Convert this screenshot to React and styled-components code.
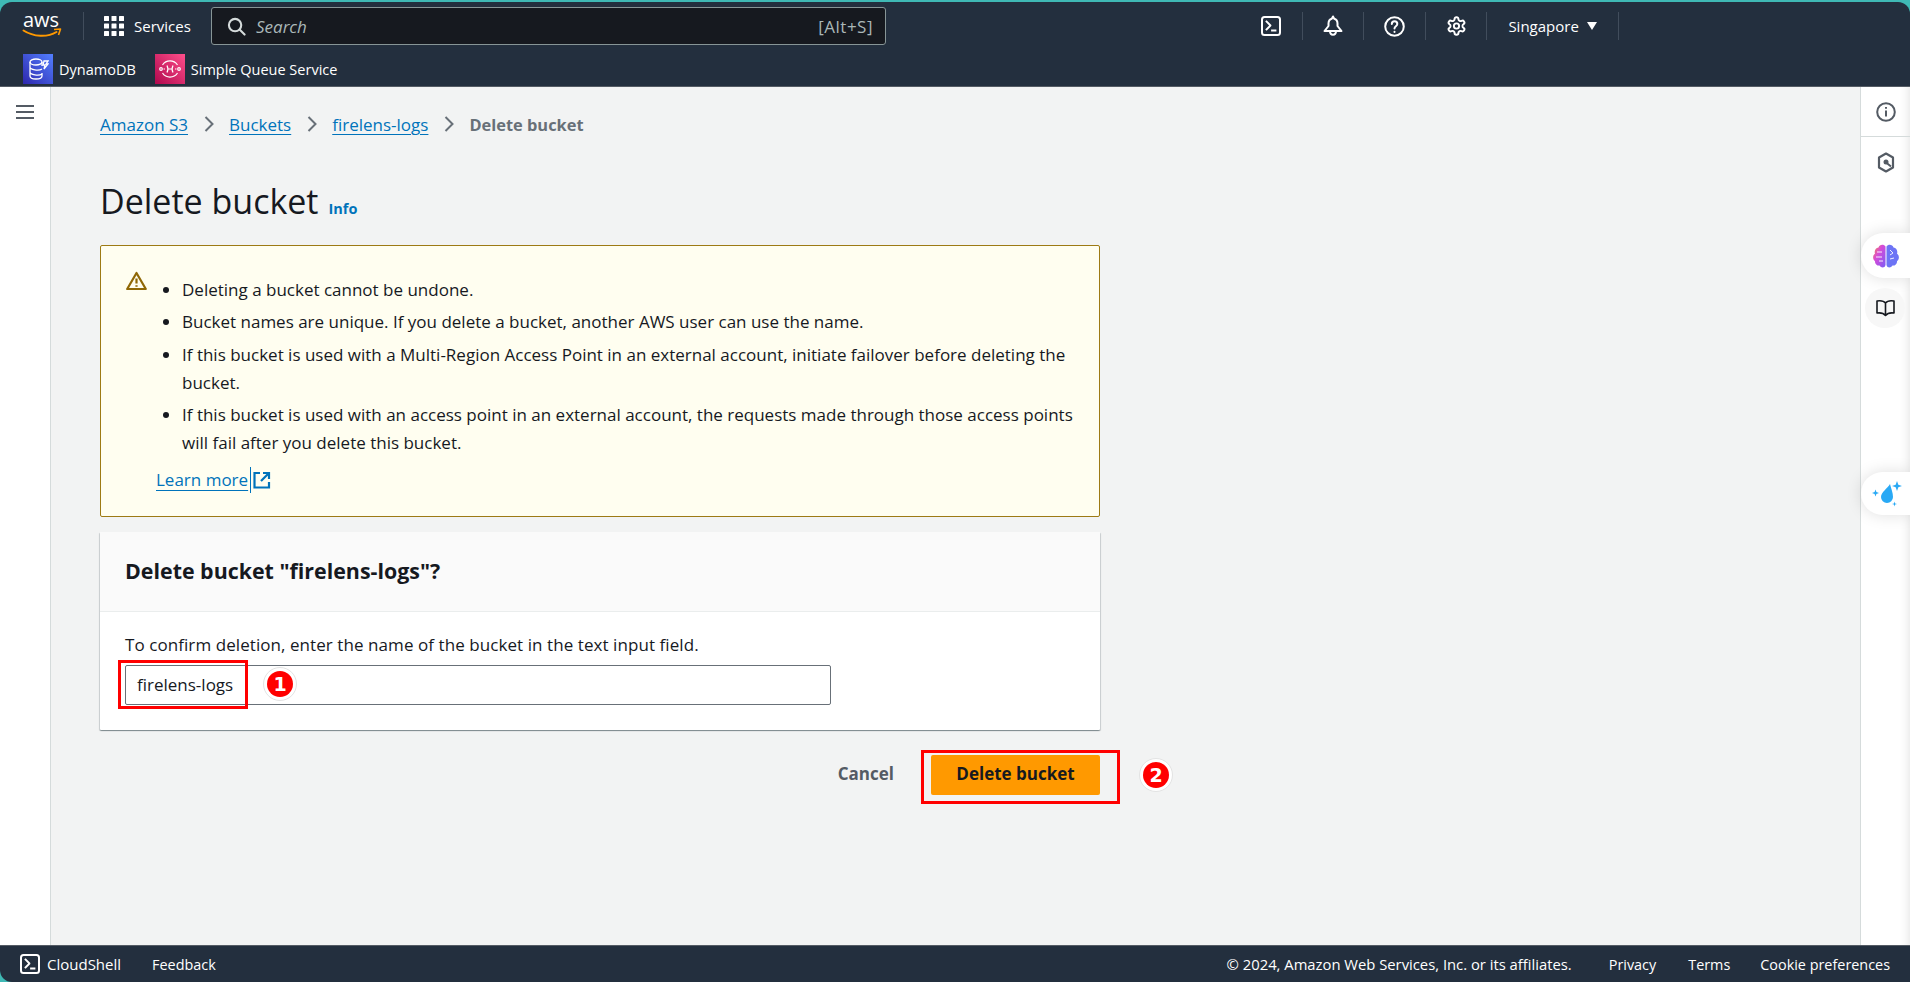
import React from "react";
import styled, { createGlobalStyle } from "styled-components";

const Global = createGlobalStyle`
  html, body { margin: 0; padding: 0; height: 100%; overflow: hidden; }
  body { font-family: "Open Sans", "Noto Sans", sans-serif; color: #16191f; }
  * { box-sizing: border-box; }
`;

const Page = styled.div`
  width: 1910px; height: 982px; display: flex; flex-direction: column;
  background: #3fb9b5; padding-top: 2px; overflow: hidden;
`;
const Header = styled.header`
  height: 85px; background: #232f3e; border-radius: 12px 12px 0 0;
  border-bottom: 1px solid #545b64; display: flex; flex-direction: column; flex: none;
`;
const TopRow = styled.div`
  height: 48px; display: flex; align-items: center; color: #fff; padding-left: 23px; flex: none;
`;
const FavRow = styled.div`
  height: 36px; display: flex; align-items: center; padding: 2px 0 0 23px; gap: 19px; color: #fff; flex: none;
`;
const Logo = styled.svg`width: 39px; height: 28px; flex: none; overflow: visible;`;
const Divider = styled.span`
  width: 1px; height: 28px; background: #414d5c; flex: none; margin: ${p => p.$m || "0"};
`;
const ServicesBtn = styled.div`
  display: flex; align-items: center; gap: 10px; font-size: 15px; margin-left: 20px; width: 107px; white-space: nowrap;
`;
const SearchBox = styled.div`
  width: 675px; height: 38px; background: #16191f; border: 1px solid #879596; border-radius: 3px;
  display: flex; align-items: center; padding: 0 12px 0 15px; gap: 10px; color: #aab7b8; font-size: 17px;
`;
const SearchText = styled.span`font-style: italic; flex: 1;`;
const ShortcutHint = styled.span`letter-spacing: 0.5px;`;
const Actions = styled.div`
  display: flex; align-items: center; margin-left: 355px; height: 28px;
`;
const ActionIcon = styled.div`
  width: 60.6px; height: 28px; display: flex; align-items: center; justify-content: center; flex: none;
`;
const Region = styled.div`
  display: flex; align-items: center; gap: 8px; font-size: 15px; padding-left: 21px; width: 131px; white-space: nowrap;
`;
const Caret = styled.span`
  width: 0; height: 0; border-left: 5px solid transparent; border-right: 5px solid transparent; border-top: 8px solid #fff;
`;
const Fav = styled.div`display: flex; align-items: center; gap: 6px; font-size: 14.5px; white-space: nowrap;`;
const FavIcon = styled.div`
  width: 30px; height: 30px; display: flex; align-items: center; justify-content: center; flex: none;
  background: linear-gradient(45deg, ${p => p.$from}, ${p => p.$to});
`;

const Main = styled.div`flex: 1; display: flex; background: #f2f3f3; min-height: 0;`;
const LeftNav = styled.aside`
  width: 51px; background: #fff; border-right: 1px solid #d5dbdb; flex: none; display: flex; justify-content: center; align-items: flex-start; padding-top: 17px;
`;
const Content = styled.main`flex: 1; padding: 25px 0 0 49px; position: relative;`;
const Column = styled.div`width: 1000px; display: flex; flex-direction: column;`;
const Crumbs = styled.nav`
  display: flex; align-items: center; height: 24px; font-size: 17px;
`;
const Link = styled.a`
  color: #0073bb; text-decoration: underline; text-underline-offset: 3px; text-decoration-thickness: 1px;
`;
const Sep = styled.svg`width: 16px; height: 16px; margin: 0 12.5px; flex: none;`;
const Current = styled.span`color: #687078; font-weight: 700; font-size: 16.4px;`;
const TitleRow = styled.div`display: flex; align-items: baseline; gap: 10px; margin-top: 43px; height: 44px;`;
const Title = styled.h1`margin: 0; font-weight: 400; font-size: 34px; line-height: 44px;`;
const InfoLink = styled.a`color: #0073bb; font-size: 14.5px; font-weight: 700;`;
const Alert = styled.section`
  margin-top: 22px; height: 272px; background: #fffef0; border: 1px solid #9d7a14; border-radius: 2px;
  padding: 25px 0 0 25px; display: flex;
`;
const AlertIcon = styled.svg`width: 21px; height: 20px; flex: none;`;
const AlertBody = styled.div`display: flex; flex-direction: column; font-size: 17px; line-height: 28px;`;
const Bullets = styled.ul`margin: 0; padding: 5px 0 0 35px; width: 935px;`;
const Bullet = styled.li`
  margin: 0 0 4.4px; &::marker { font-size: 17px; }
`;
const LearnRow = styled.div`display: flex; align-items: center; margin: 5px 0 0 9px; height: 26px;`;
const LearnLink = styled(Link)`
  border-right: 1px solid #0073bb; padding-right: 2px; line-height: 26px; text-underline-offset: 4px;
`;
const ExtIcon = styled.svg`width: 18px; height: 18px; margin-left: 2px;`;
const Card = styled.section`
  margin-top: 15px; height: 198px; background: #fff; box-shadow: 0 1px 1px 0 rgba(0,28,36,.3), 1px 1px 1px 0 rgba(0,28,36,.15), -1px 1px 1px 0 rgba(0,28,36,.15);
  border-radius: 1px;
`;
const CardHead = styled.div`
  height: 80px; background: #fafafa; border-bottom: 1px solid #eaeded; display: flex; align-items: center; padding: 0 25px 3px;
`;
const CardTitle = styled.h2`margin: 0; font-size: 21.4px; font-weight: 700;`;
const CardBody = styled.div`padding: 21px 25px 0; position: relative;`;
const Hint = styled.p`margin: 0; font-size: 17px; line-height: 24px; letter-spacing: 0.07px;`;
const Input = styled.div`
  margin-top: 8px; width: 706px; height: 40px; border: 1px solid #687078; border-radius: 2px; background: #fff;
  display: flex; align-items: center; padding: 0 11px 2px; font-size: 17px;
`;
const Highlight = styled.span`
  position: absolute; border: 3px solid #f00; pointer-events: none;
  left: ${p => p.$l}px; top: ${p => p.$t}px; width: ${p => p.$w}px; height: ${p => p.$h}px;
`;
const Badge = styled.span`
  position: absolute; left: ${p => p.$l}px; top: ${p => p.$t}px; width: 34px; height: 34px; border-radius: 50%;
  background: #fff; border: 1px solid #e3e3e3; display: flex; align-items: center; justify-content: center;
  &::before {
    content: "${p => p.$n}"; width: 26px; height: 26px; border-radius: 50%; background: #f00; color: #fff;
    font: 700 19px/26px "DejaVu Sans", sans-serif; text-align: center;
  }
`;
const Footer2 = styled.div`
  display: flex; justify-content: flex-end; align-items: center; margin-top: 25px; height: 40px; position: relative; gap: 37px;
`;
const CancelBtn = styled.span`color: #545b64; font-size: 17px; font-weight: 700; padding-bottom: 3px;`;
const PrimaryBtn = styled.button`
  width: 169px; height: 40px; background: #ff9900; border: none; border-radius: 2px; color: #16191f;
  font: 700 17px "Open Sans", sans-serif; padding: 0 0 3px;
`;

const RightRail = styled.aside`
  width: 50px; flex: none; background: #fff; border-left: 1px solid #d5dbdb; display: flex; flex-direction: column; position: relative;
  box-shadow: inset -12px 0 10px -10px rgba(0,0,0,.1);
`;
const RailCell = styled.div`
  height: ${p => p.$h}px; display: flex; align-items: center; justify-content: center; flex: none;
  border-bottom: ${p => p.$b ? "1px solid #d5dbdb" : "none"};
`;
const Float = styled.div`
  position: absolute; right: ${p => p.$r}px; top: ${p => p.$t}px; width: ${p => p.$w}px; height: ${p => p.$h}px;
  background: ${p => p.$bg || "#fff"}; display: flex; align-items: center; justify-content: center;
  border-radius: ${p => p.$round};
  box-shadow: ${p => p.$sh || "0 0 16px rgba(0,0,0,.13)"};
`;

const Footer = styled.footer`
  height: 37px; flex: none; background: #232f3e; border-radius: 0 0 0 12px; border-top: 1px solid #545b64; color: #fff;
  display: flex; align-items: center; padding: 0 20px 0 20px; font-size: 14.4px;
`;
const FootLeft = styled.div`display: flex; align-items: center; gap: 7px; font-size: 15px;`;
const FootItem = styled.span`margin-left: ${p => p.$m || 0}px; white-space: nowrap;`;
const Copyright = styled(FootItem)`font-size: 14.8px;`;
const Spacer = styled.div`flex: 1;`;

const TermIcon = () => (
  <svg width="20" height="20" viewBox="0 0 20 20" fill="none" stroke="#fff" strokeWidth="2" strokeLinejoin="round" strokeLinecap="square">
    <rect x="1" y="1" width="18" height="18" rx="2.5" />
    <path d="M5.500 5.500L9.500 9.500l-4 4M11 14.500h3.500" strokeWidth="1.800" />
  </svg>
);
const Chevron = () => (
  <Sep viewBox="0 0 16 16" fill="none" stroke="#687078" strokeWidth="2"><path d="M4.500 1L11.500 8l-7 7" /></Sep>
);

export default function App() {
  return (
    <Page>
      <Global />
      <Header>
        <TopRow>
          <Logo viewBox="0 0 39 28">
            <text x="0" y="15" fontFamily="Open Sans, sans-serif" fontSize="20" fill="#fff">aws</text>
            <path d="M0.500 18.500c10 6.500 24 7 33 1.500" stroke="#f90" strokeWidth="2" fill="none" strokeLinecap="round" />
            <path d="M31 17.500l6.500-.5-2 6" stroke="#f90" strokeWidth="1.600" fill="none" strokeLinejoin="round" />
          </Logo>
          <Divider $m="0 0 0 21px" />
          <ServicesBtn>
            <svg width="20" height="20" viewBox="0 0 20 20" fill="#fff">
              {[0, 7.500, 15].flatMap(x => [0, 7.500, 15].map(y => <rect key={`${x}-${y}`} x={x} y={y} width="5" height="5" rx=".5" />))}
            </svg>
            Services
          </ServicesBtn>
          <SearchBox>
            <svg width="19" height="19" viewBox="0 0 20 20" fill="none" stroke="#d5dbdb" strokeWidth="2.200" strokeLinecap="round">
              <circle cx="8.500" cy="8.500" r="6.500" />
              <path d="M13.500 13.500l5 5" />
            </svg>
            <SearchText>Search</SearchText>
            <ShortcutHint>[Alt+S]</ShortcutHint>
          </SearchBox>
          <Actions>
            <ActionIcon><TermIcon /></ActionIcon>
            <Divider />
            <ActionIcon>
              <svg width="20" height="22" viewBox="0 0 20 22" fill="none" stroke="#fff" strokeWidth="2" strokeLinejoin="round">
                <path d="M10 1.500l1.200 2.200c2.300.6 3.300 2.400 3.300 4.800v2.500l4 5h-17l4-5V8.500c0-2.400 1-4.200 3.300-4.800z" />
                <path d="M7 16c0 5 6 5 6 0" />
              </svg>
            </ActionIcon>
            <Divider />
            <ActionIcon>
              <svg width="21" height="21" viewBox="0 0 21 21" fill="none" stroke="#fff" strokeWidth="2" strokeLinecap="round">
                <circle cx="10.500" cy="10.500" r="9.300" />
                <path d="M7.800 8c0-3.600 5.500-3.600 5.500 0 0 2.300-2.800 2.300-2.800 4.600" />
                <path d="M10.500 15.800v.2" />
              </svg>
            </ActionIcon>
            <Divider />
            <ActionIcon>
              <svg width="21" height="22" viewBox="0 0 24 24" fill="none" stroke="#fff" strokeWidth="2.200" strokeLinecap="round" strokeLinejoin="round">
                <path d="M12.220 2h-.44a2 2 0 0 0-2 2v.18a2 2 0 0 1-1 1.730l-.43.250a2 2 0 0 1-2 0l-.15-.080a2 2 0 0 0-2.730.730l-.22.380a2 2 0 0 0 .73 2.730l.15.100a2 2 0 0 1 1 1.720v.510a2 2 0 0 1-1 1.740l-.15.090a2 2 0 0 0-.73 2.730l.22.380a2 2 0 0 0 2.730.730l.15-.080a2 2 0 0 1 2 0l.43.250a2 2 0 0 1 1 1.730V20a2 2 0 0 0 2 2h.44a2 2 0 0 0 2-2v-.18a2 2 0 0 1 1-1.730l.43-.250a2 2 0 0 1 2 0l.15.080a2 2 0 0 0 2.730-.730l.22-.390a2 2 0 0 0-.73-2.730l-.15-.080a2 2 0 0 1-1-1.740v-.500a2 2 0 0 1 1-1.740l.15-.090a2 2 0 0 0 .73-2.730l-.22-.380a2 2 0 0 0-2.730-.730l-.15.080a2 2 0 0 1-2 0l-.43-.250a2 2 0 0 1-1-1.730V4a2 2 0 0 0-2-2z" />
                <circle cx="12" cy="12" r="3" />
              </svg>
            </ActionIcon>
            <Divider />
            <Region>Singapore <Caret /></Region>
            <Divider />
          </Actions>
        </TopRow>
        <FavRow>
          <Fav>
            <FavIcon $from="#2e27ad" $to="#527fff">
              <svg width="22" height="24" viewBox="0 0 22 24" fill="none" stroke="#fff" strokeWidth="1.300">
                <ellipse cx="9" cy="5" rx="6" ry="3" />
                <path d="M3 5v14c0 4 12 4 12 0v-3M3 10c0 3 9 4 12 2M3 15c0 3 9 4 12 2M15 5v4" />
                <path d="M17 4h4l-2 3h2l-4 5 1-4h-2z" />
              </svg>
            </FavIcon>
            DynamoDB
          </Fav>
          <Fav>
            <FavIcon $from="#b0084d" $to="#ff4f8b">
              <svg width="24" height="24" viewBox="0 0 24 24" fill="none" stroke="#fff" strokeWidth="1.200">
                <path d="M4.500 8a9 9 0 0 1 15 0M4.500 16a9 9 0 0 0 15 0" />
                <path d="M9 8.500c1.200 2.300 1.200 4.700 0 7M15 8.500c-1.200 2.300-1.200 4.700 0 7M9.500 12h5" />
                <circle cx="3" cy="12" r="1.300" /><circle cx="21" cy="12" r="1.300" />
                <path d="M5.500 12h1.500M17 12h1.500" />
              </svg>
            </FavIcon>
            Simple Queue Service
          </Fav>
        </FavRow>
      </Header>
      <Main>
        <LeftNav>
          <svg width="18" height="16" viewBox="0 0 18 16" stroke="#545b64" strokeWidth="2">
            <path d="M0 2h18M0 8h18M0 14h18" />
          </svg>
        </LeftNav>
        <Content>
          <Column>
            <Crumbs>
              <Link>Amazon S3</Link>
              <Chevron />
              <Link>Buckets</Link>
              <Chevron />
              <Link>firelens-logs</Link>
              <Chevron />
              <Current>Delete bucket</Current>
            </Crumbs>
            <TitleRow>
              <Title>Delete bucket</Title>
              <InfoLink>Info</InfoLink>
            </TitleRow>
            <Alert>
              <AlertIcon viewBox="0 0 21 20" fill="none" stroke="#906806" strokeWidth="2.200" strokeLinejoin="round">
                <path d="M10.500 2L1.200 18h18.600z" />
                <path d="M10.500 7.500v5M10.500 14.200v1.600" strokeWidth="2.200" />
              </AlertIcon>
              <AlertBody>
                <Bullets>
                  <Bullet>Deleting a bucket cannot be undone.</Bullet>
                  <Bullet>Bucket names are unique. If you delete a bucket, another AWS user can use the name.</Bullet>
                  <Bullet>If this bucket is used with a Multi-Region Access Point in an external account, initiate failover before deleting the bucket.</Bullet>
                  <Bullet>If this bucket is used with an access point in an external account, the requests made through those access points will fail after you delete this bucket.</Bullet>
                </Bullets>
                <LearnRow>
                  <LearnLink>Learn more</LearnLink>
                  <ExtIcon viewBox="0 0 18 18" fill="none" stroke="#0073bb" strokeWidth="2.200">
                    <path d="M7 2H1.500v14.500H16V11M10 2h6v6M16 2L8 10" />
                  </ExtIcon>
                </LearnRow>
              </AlertBody>
            </Alert>
            <Card>
              <CardHead><CardTitle>Delete bucket "firelens-logs"?</CardTitle></CardHead>
              <CardBody>
                <Hint>To confirm deletion, enter the name of the bucket in the text input field.</Hint>
                <Input>firelens-logs</Input>
                <Highlight $l={18} $t={48} $w={130} $h={49} />
                <Badge $l={163} $t={55} $n="1" />
              </CardBody>
            </Card>
            <Footer2>
              <CancelBtn>Cancel</CancelBtn>
              <PrimaryBtn>Delete bucket</PrimaryBtn>
              <Highlight $l={821} $t={-5} $w={199} $h={54} />
              <Badge $l={1039} $t={3} $n="2" />
            </Footer2>
          </Column>
        </Content>
        <RightRail>
          <RailCell $h={50} $b>
            <svg width="20" height="20" viewBox="0 0 20 20" fill="none" stroke="#545b64" strokeWidth="2">
              <circle cx="10" cy="10" r="8.800" /><path d="M10 8.500v6M10 5v1.800" />
            </svg>
          </RailCell>
          <RailCell $h={50}>
            <svg width="18" height="21" viewBox="0 0 18 21" fill="none" stroke="#545b64" strokeWidth="2.200" strokeLinejoin="round">
              <path d="M9 1.500l7 4v10l-7 4-7-4v-10z" />
              <circle cx="9" cy="10" r="2.500" fill="#545b64" stroke="none" />
              <path d="M9 10.500l5 4" strokeWidth="2" />
            </svg>
          </RailCell>
          <Float $r={0} $t={146} $w={49} $h={45} $round="23px 0 0 23px">
            <svg width="26" height="24" viewBox="0 0 26 24">
              <defs>
                <linearGradient id="br" x1="0" y1="0" x2="1" y2="1"><stop offset="0" stopColor="#ff8a3c" /><stop offset=".4" stopColor="#d64bd8" /><stop offset="1" stopColor="#7a5cf5" /></linearGradient>
              </defs>
              <path fill="url(#br)" d="M12.500 2.500C11 0 6.500 0 5.500 3.500 2.500 4 1 7 2 9.500-.5 11.500-.5 15.500 2 17c-.5 3 2.500 5 4.500 4.500 1.500 2.500 5 3 6-.5z" />
              <path fill="#6d74f5" d="M13.500 2.500C15 0 19.500 0 20.500 3.500 23.500 4 25 7 24 9.500c2.500 2 2.500 6 0 7.500.5 3-2.500 5-4.500 4.500-1.500 2.500-5 3-6-.5z" />
              <path stroke="#fff" strokeWidth=".9" fill="none" d="M4 8h5M3 13h6M6 17h4M17 6l3 3-3 2M17 15l4-1" />
            </svg>
          </Float>
          <Float $r={5} $t={201} $w={40} $h={40} $round="50%" $bg="#f7f7f7" $sh="none">
            <svg width="19" height="18" viewBox="0 0 19 18" fill="none" stroke="#16191f" strokeWidth="1.600" strokeLinejoin="round">
              <path d="M9.500 4C8 2 4.500 1.500 1 2v12c3.500-.5 6.500 0 8.500 2.500C11.500 14 14.500 13.500 18 14V2c-3.500-.5-7 0-8.500 2zM9.500 4v12.500" />
            </svg>
          </Float>
          <Float $r={0} $t={385} $w={49} $h={43} $round="22px 0 0 22px">
            <svg width="32" height="30" viewBox="0 0 32 30" fill="#29a9f5">
              <path d="M20 5C18 9 11 13 11 18a6 6 0 0 0 12 0C23 14 21 9 20 5z" />
              <path d="M27 2l1.300 3.700L32 7l-3.700 1.300L27 12l-1.300-3.700L22 7l3.700-1.300zM5.500 10.500l.9 2.600 2.600.9-2.600.9-.9 2.600-.9-2.600L2 14l2.600-.9zM24.500 22.500l.6 1.900 1.900.6-1.900.6-.6 1.900-.6-1.900-1.900-.6 1.900-.6z" />
            </svg>
          </Float>
        </RightRail>
      </Main>
      <Footer>
        <FootLeft><TermIcon /><span>CloudShell</span></FootLeft>
        <FootItem $m={31}>Feedback</FootItem>
        <Spacer />
        <Copyright>© 2024, Amazon Web Services, Inc. or its affiliates.</Copyright>
        <FootItem $m={37}>Privacy</FootItem>
        <FootItem $m={32}>Terms</FootItem>
        <FootItem $m={30}>Cookie preferences</FootItem>
      </Footer>
    </Page>
  );
}
